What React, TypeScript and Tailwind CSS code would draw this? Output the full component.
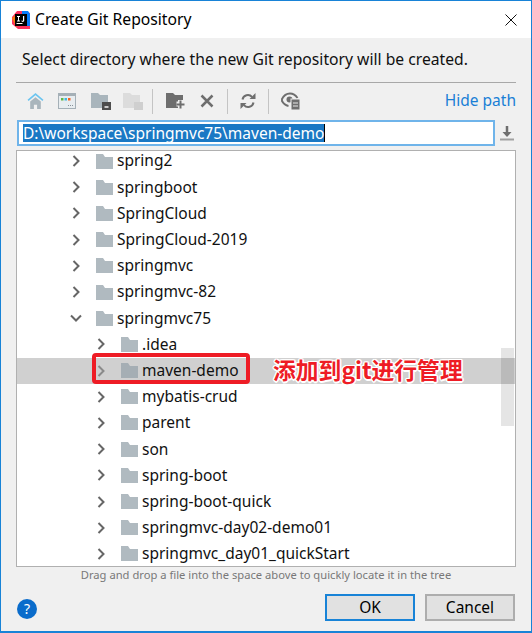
const rows = [
  { name: 'spring2', level: 0 },
  { name: 'springboot', level: 0 },
  { name: 'SpringCloud', level: 0 },
  { name: 'SpringCloud-2019', level: 0 },
  { name: 'springmvc', level: 0 },
  { name: 'springmvc-82', level: 0 },
  { name: 'springmvc75', level: 0, open: true },
  { name: '.idea', level: 1 },
  { name: 'maven-demo', level: 1, selected: true },
  { name: 'mybatis-crud', level: 1 },
  { name: 'parent', level: 1 },
  { name: 'son', level: 1 },
  { name: 'spring-boot', level: 1 },
  { name: 'spring-boot-quick', level: 1 },
  { name: 'springmvc-day02-demo01', level: 1 },
  { name: 'springmvc_day01_quickStart', level: 1 },
];

function Folder({ className = 'w-[17px] h-[15px]', color = '#b0bac0' }: { className?: string; color?: string }) {
  return (
    <svg viewBox="0 0 17 15" className={className}>
      <path d="M0 0h7l2 3h8v12H0z" fill={color} />
    </svg>
  );
}

function Sep({ className = '' }: { className?: string }) {
  return <div className={`w-px h-[25px] bg-[#c4c4c4] ${className}`} />;
}

function TreeRow({ name, level, open, selected }: { name: string; level: number; open?: boolean; selected?: boolean }) {
  return (
    <div className={`h-[26.2px] flex items-center text-[15.5px] text-[#111] ${selected ? 'bg-[#d0d0d0]' : ''} ${level ? 'pl-[78px]' : 'pl-[53px]'}`}>
      <svg viewBox="0 0 12 12" className="w-3 h-3 mr-[14px] shrink-0">
        {open ? (
          <path d="M1 3.500l5 5 5-5" fill="none" stroke="#666" strokeWidth="2" />
        ) : (
          <path d="M3.500 1l5 5-5 5" fill="none" stroke={selected ? '#8a8a8a' : '#666'} strokeWidth="2" />
        )}
      </svg>
      <Folder color={selected ? '#a5aeb4' : '#b0bac0'} />
      <span className="ml-1 whitespace-nowrap">{name}</span>
    </div>
  );
}

export default function App() {
  return (
    <div className="w-[532px] h-[633px] border-x border-t border-b-2 border-[#1883d7] bg-[#f0f0f0] flex flex-col overflow-hidden" style={{ fontFamily: '"Noto Sans", sans-serif' }}>
      {/* Title bar */}
      <div className="h-[37px] shrink-0 bg-white flex items-center pl-[10px] pr-[14px]">
        <svg viewBox="0 0 20 20" className="w-5 h-5 shrink-0">
          <path d="M1 7L6 1h8l5 2v16H7L1 14z" fill="#fe315d" />
          <path d="M11 1h6l2 3v12h-8z" fill="#087cfa" />
          <path d="M1 8l5-4 2 10-3 3z" fill="#f97a12" />
          <rect x="4" y="4" width="12" height="12" fill="#000" />
          <rect x="5.500" y="13" width="6" height="1" fill="#fff" />
          <path d="M6 6h3v1H8v3.500h1v1H6v-1h1V7H6zM12 6h1.200v4.500c0 1-.6 1.400-1.500 1.400-.7 0-1.200-.3-1.500-.8l.7-.7c.2.300.4.400.7.400.3 0 .4-.1.400-.4z" fill="#fff" />
        </svg>
        <span className="ml-[4px] text-[15.7px] text-black">Create Git Repository</span>
        <svg viewBox="0 0 12 12" className="w-3 h-3 ml-auto">
          <path d="M0.500 0.500l11 11M11.500 0.500l-11 11" stroke="#111" strokeWidth="1" />
        </svg>
      </div>

      <div className="flex-1 flex flex-col px-[15px] min-h-0">
        <div className="h-[45px] shrink-0 flex items-center pl-[6px] text-[15.7px] text-[#111] whitespace-nowrap border-b border-[#a8a8a8]">
          Select directory where the new Git repository will be created.
        </div>

        {/* Toolbar */}
        <div className="h-[36px] shrink-0 flex items-center pl-[11px]">
          <svg viewBox="0 0 16 16" className="w-[17px] h-[17px]">
            <path d="M1 7l7-6 7 6" fill="none" stroke="#6cc5f0" strokeWidth="1.500" />
            <path d="M3 8l5-4 5 4v7H9.500v-4h-3v4H3z" fill="#a9b5bc" />
          </svg>
          <svg viewBox="0 0 18 16" className="w-[18px] h-[16px] ml-[14px]">
            <rect x="0.500" y="0.500" width="17" height="15" fill="#e8edf0" stroke="#a5b0b7" />
            <rect x="1" y="1" width="16" height="2" fill="#a5b0b7" />
            <rect x="3" y="5" width="2.500" height="2.500" fill="#62b543" />
            <rect x="6.500" y="5" width="2.500" height="2.500" fill="#40b6e0" />
            <rect x="10" y="5" width="2.500" height="2.500" fill="#f26522" />
            <rect x="10" y="12" width="1" height="1" fill="#8a9299" />
            <rect x="12" y="12" width="1" height="1" fill="#8a9299" />
            <rect x="14" y="12" width="1" height="1" fill="#8a9299" />
          </svg>
          <svg viewBox="0 0 20 18" className="w-5 h-[18px] ml-[15px]">
            <path d="M0 1h7l2 2h8v13H0z" fill="#a9b5bc" />
            <rect x="11" y="10" width="9" height="8" fill="#4d4d4d" />
            <rect x="13.500" y="14" width="4" height="2" fill="#ccc" />
          </svg>
          <svg viewBox="0 0 20 18" className="w-5 h-[18px] ml-[12px]">
            <path d="M0 1h7l2 2h8v13H0z" fill="#dcdcdc" />
            <rect x="11" y="10" width="9" height="8" fill="#cfcfcf" />
          </svg>
          <Sep className="ml-[9px]" />
          <svg viewBox="0 0 20 18" className="w-5 h-[18px] ml-[13px]">
            <path d="M0 1h7l2 2h8v13H0z" fill="#6e6e6e" />
            <path d="M10.500 12h8M14.500 8v8" stroke="#f0f0f0" strokeWidth="5" />
            <path d="M10.500 12.500h8M14.500 8.500v8" stroke="#6e6e6e" strokeWidth="2" />
          </svg>
          <svg viewBox="0 0 14 14" className="w-[14px] h-[14px] ml-[14px]">
            <path d="M1.500 1.500l11 11M12.500 1.500l-11 11" stroke="#6e6e6e" strokeWidth="2.500" />
          </svg>
          <Sep className="ml-[13px]" />
          <svg viewBox="0 0 16 16" className="w-4 h-4 ml-[12px]">
            <path d="M2.500 6.500A5.500 5.500 0 0 1 12 3.800M13.500 9.500A5.500 5.500 0 0 1 4 12.200" fill="none" stroke="#6e6e6e" strokeWidth="2" />
            <path d="M9.500 6h6V0zM6.500 10h-6v6z" fill="#6e6e6e" />
          </svg>
          <Sep className="ml-[12px]" />
          <svg viewBox="0 0 20 18" className="w-5 h-[18px] ml-[12px]">
            <path d="M0.500 8C2.500 3.500 5.500 1.500 9 1.500c3 0 5.500 1.500 7.500 4.500" fill="none" stroke="#6e6e6e" strokeWidth="2" />
            <path d="M0.500 8c1.500 3.500 4 5.500 7 6" fill="none" stroke="#6e6e6e" strokeWidth="2" />
            <circle cx="8.500" cy="7.500" r="3" fill="#6e6e6e" />
            <rect x="10" y="7" width="9" height="11" fill="#6e6e6e" stroke="#f0f0f0" />
            <path d="M12 11h5M12 14h5" stroke="#e8e8e8" />
          </svg>
          <span className="ml-auto text-[15.5px] text-[#1a7fd6]">Hide path</span>
        </div>

        {/* Path input */}
        <div className="shrink-0 flex items-center h-[27px]">
          <div className="ml-[1px] w-[478px] h-[26px] border-2 border-[#6fb4ea] bg-white pl-[4px] flex items-center text-[15.5px] whitespace-nowrap">
            <span className="bg-[#1a78c4] text-white h-[18px] leading-[18px] border-r border-black">D:\workspace\springmvc75\maven-demo</span>
          </div>
          <svg viewBox="0 0 16 16" className="w-4 h-4 ml-[4px]">
            <path d="M8 1v8" stroke="#6e6e6e" strokeWidth="2.500" />
            <path d="M3.500 7h9L8 12z" fill="#6e6e6e" />
            <rect x="1" y="13.500" width="14" height="2" fill="#a0a0a0" />
          </svg>
        </div>

        {/* Tree */}
        <div className="relative mt-[4px] w-[500px] h-[417px] shrink-0 bg-white border border-[#b0b0b0] overflow-hidden">
          <div className="mt-[-3px]">
            {rows.map((r) => (
              <TreeRow key={r.name} {...r} />
            ))}
          </div>
          {/* scrollbar */}
          <div className="absolute right-[1px] top-[197px] w-[13px] h-[78px] bg-black/10" />
          {/* annotation box */}
          <div className="absolute left-[75px] top-[202px] w-[158px] h-[31px] border-4 border-[#ee1c25] rounded-[4px]" />
          <span
            className="absolute left-[256px] top-[205px] text-[22.800px] leading-[28px] font-bold text-[#ee1c25] whitespace-nowrap [text-shadow:1.500px_0_0_#fff,-1.500px_0_0_#fff,0_1.500px_0_#fff,0_-1.500px_0_#fff,1px_1px_0_#fff,-1px_-1px_0_#fff,1px_-1px_0_#fff,-1px_1px_0_#fff]"
            style={{ fontFamily: '"Noto Sans CJK SC", "Noto Sans", sans-serif' }}
          >
            添加到git进行管理
          </span>
        </div>

        <div className="h-[16px] shrink-0 flex items-center justify-center text-[11.200px] text-[#787878] whitespace-nowrap">
          Drag and drop a file into the space above to quickly locate it in the tree
        </div>

        {/* Footer */}
        <div className="flex items-start pt-[11px]">
          <div className="mt-[5px] ml-[1px] w-5 h-5 rounded-full bg-[#0a6ccb] flex items-center justify-center text-white text-[14px] leading-none">?</div>
          <button className="ml-auto w-[90px] h-[27px] border-2 border-[#1883d7] bg-[#e1e1e1] text-[15.500px] text-black flex items-center justify-center">OK</button>
          <button className="ml-[10px] mr-[1px] w-[90px] h-[27px] border-2 border-[#adadad] bg-[#e1e1e1] text-[15.500px] text-black flex items-center justify-center">Cancel</button>
        </div>
      </div>
    </div>
  );
}
